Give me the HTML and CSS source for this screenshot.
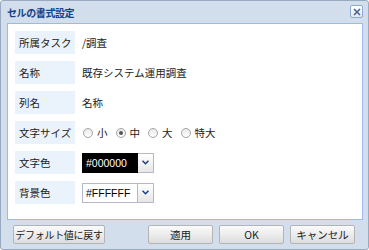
FILE: index.html
```html
<!DOCTYPE html>
<html lang="ja">
<head>
  <meta charset="UTF-8">
  <title>セルの書式設定</title>
  <link rel="stylesheet" href="styles.css">
</head>
<body>
  <div class="window">
    <!-- タイトルバー -->
    <div class="header">
      <span class="title">セルの書式設定</span>
      <span class="close">
        <svg width="8" height="8" viewBox="0 0 8 8"><path d="M1 1 L7 7 M7 1 L1 7" stroke="#4a6591" stroke-width="1.6" fill="none"/></svg>
      </span>
    </div>

    <!-- 設定フォーム -->
    <div class="panel">
      <div class="row">
        <div class="label">所属タスク</div>
        <div class="value">/調査</div>
      </div>
      <div class="row">
        <div class="label">名称</div>
        <div class="value">既存システム運用調査</div>
      </div>
      <div class="row">
        <div class="label">列名</div>
        <div class="value">名称</div>
      </div>
      <div class="row">
        <div class="label">文字サイズ</div>
        <div class="value radios">
          <span class="radio"></span><span class="opt">小</span>
          <span class="radio checked"></span><span class="opt">中</span>
          <span class="radio"></span><span class="opt">大</span>
          <span class="radio"></span><span class="opt">特大</span>
        </div>
      </div>
      <div class="row">
        <div class="label">文字色</div>
        <div class="value">
          <div class="combo">
            <span class="combo-text dark">#000000</span>
            <span class="combo-btn"><svg width="7" height="5" viewBox="0 0 7 5"><path d="M0.5 0.8 L3.5 3.8 L6.5 0.8" stroke="#1d3f7a" stroke-width="1.5" fill="none"/></svg></span>
          </div>
        </div>
      </div>
      <div class="row">
        <div class="label">背景色</div>
        <div class="value">
          <div class="combo">
            <span class="combo-text">#FFFFFF</span>
            <span class="combo-btn"><svg width="7" height="5" viewBox="0 0 7 5"><path d="M0.5 0.8 L3.5 3.8 L6.5 0.8" stroke="#1d3f7a" stroke-width="1.5" fill="none"/></svg></span>
          </div>
        </div>
      </div>
    </div>

    <!-- ボタン -->
    <div class="footer">
      <button class="btn btn-default">デフォルト値に戻す</button>
      <div class="spacer"></div>
      <button class="btn">適用</button>
      <button class="btn">OK</button>
      <button class="btn">キャンセル</button>
    </div>
  </div>
</body>
</html>
```

FILE: styles.css
```css
/* ダイアログ全体 */
body {
  margin: 0;
  font-family: "Noto Sans CJK JP", "Liberation Sans", sans-serif;
  font-size: 10.5px;
  color: #222;
  background: #ffffff;
}
.window {
  width: 369px;
  height: 250px;
  box-sizing: border-box;
  border: 1px solid #99a9bf;
  border-radius: 3px;
  background-color: #d3deec;
  display: flex;
  flex-direction: column;
}
.header {
  height: 22px;
  display: flex;
  align-items: center;
  padding: 0 5px 0 6px;
}
.title {
  flex: 1;
  color: #15428b;
  font-weight: bold;
  font-size: 10px;
  letter-spacing: -0.4px;
}
.close {
  width: 11px;
  height: 11px;
  border: 1px solid #8eaad0;
  border-radius: 2px;
  background: linear-gradient(#ffffff, #dfe8f4);
  display: flex;
  align-items: center;
  justify-content: center;
  margin-top: -1px;
}
.panel {
  height: 188px;
  margin: 0 5px 0 6px;
  background: #ffffff;
  border: 1px solid #99bbe8;
  padding: 7px 7px 0 7px;
}
.row {
  display: flex;
  align-items: center;
  height: 23px;
  margin-bottom: 7px;
}
.label {
  width: 56px;
  height: 23px;
  line-height: 23px;
  padding-left: 4px;
  background-color: #eaf2fc;
  white-space: nowrap;
}
.value {
  margin-left: 7px;
  display: flex;
  align-items: center;
  white-space: nowrap;
}
.radios .radio {
  width: 8px;
  height: 8px;
  border: 1px solid #a3a3a3;
  border-radius: 50%;
  background: linear-gradient(#e9e9e9, #ffffff);
  margin-left: 1px;
  display: inline-flex;
  align-items: center;
  justify-content: center;
}
.radios .radio.checked::after {
  content: "";
  width: 4px;
  height: 4px;
  border-radius: 50%;
  background: #555;
}
.radios .opt {
  margin-left: 4px;
  margin-right: 7px;
}
.combo {
  display: flex;
  height: 20px;
}
.combo-text {
  width: 51px;
  height: 18px;
  line-height: 18px;
  border: 1px solid #b5b8c8;
  padding-left: 3px;
  font-family: "Liberation Sans", sans-serif;
  font-size: 10.5px;
  background: #fff;
  color: #000;
  overflow: hidden;
}
.combo-text.dark {
  background: #000;
  color: #fff;
  border-color: #000;
}
.combo-btn {
  width: 15px;
  height: 18px;
  border: 1px solid #b5b8c8;
  border-left: 0;
  background: linear-gradient(#ffffff, #e6e6e6);
  display: flex;
  align-items: center;
  justify-content: center;
}
.footer {
  flex: 1;
  display: flex;
  align-items: center;
  padding: 0 13px 0 12px;
}
.spacer {
  flex: 1;
}
.btn {
  height: 19px;
  width: 65px;
  margin-left: 6px;
  padding: 0;
  border: 1px solid #b4b4b4;
  border-radius: 2px;
  background: linear-gradient(#fbfbfb, #e9e9e9 60%, #dcdcdc);
  font-family: "Noto Sans CJK JP", "Liberation Sans", sans-serif;
  font-size: 10.5px;
  color: #222;
  white-space: nowrap;
}
.btn-default {
  width: 92px;
  margin-left: 0;
  font-size: 10px;
  letter-spacing: -0.3px;
}
```
